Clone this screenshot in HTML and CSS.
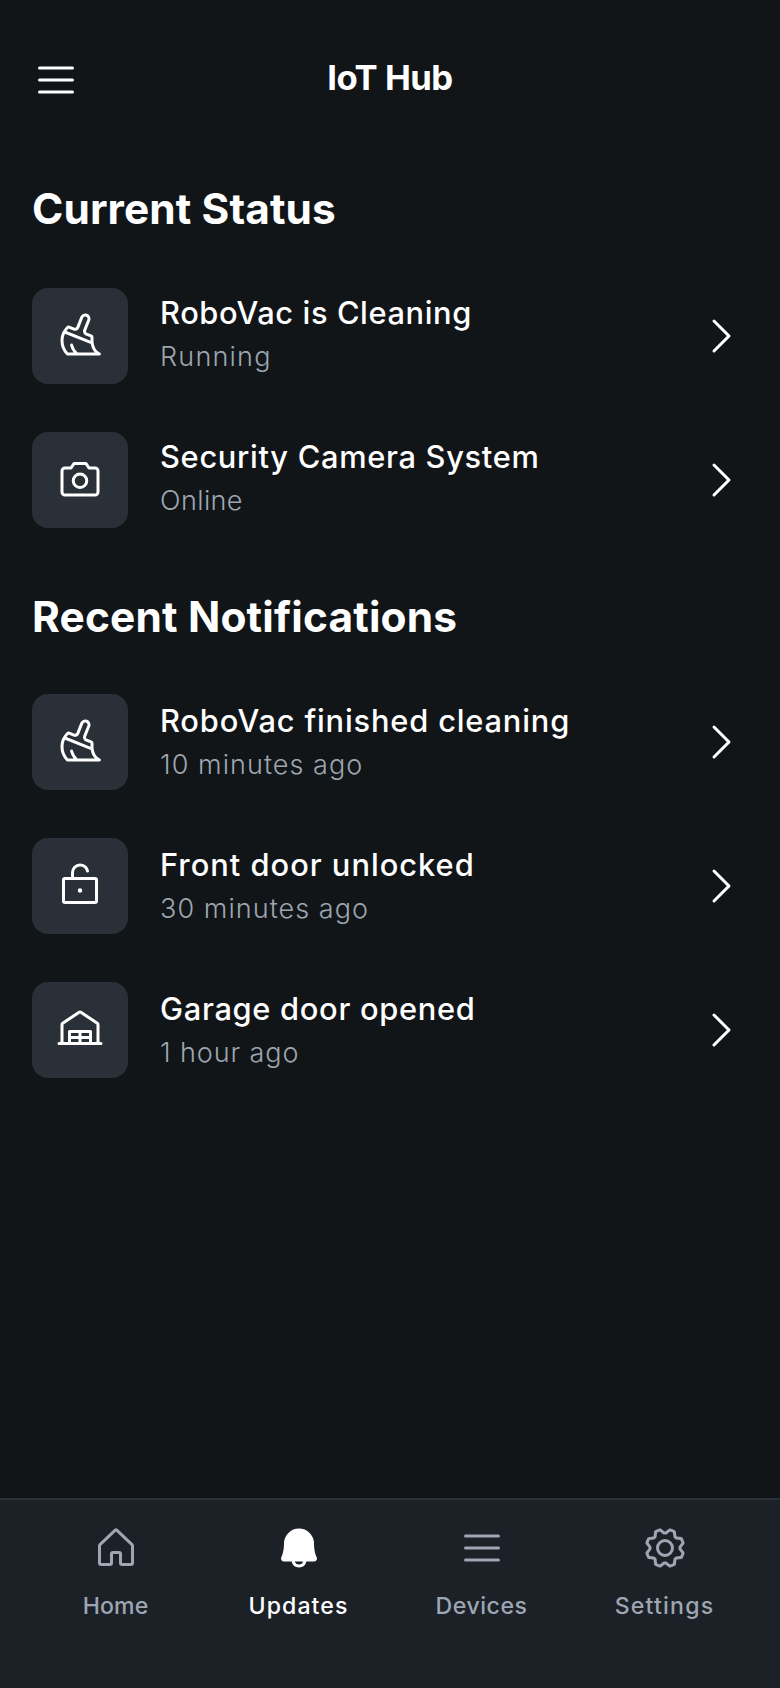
FILE: index.html
```html
<!DOCTYPE html>
<html lang="en">
<head>
<meta charset="utf-8">
<title>IoT Hub</title>
<link rel="stylesheet" href="styles.css">
</head>
<body>
<svg class="sprite" aria-hidden="true">
  <symbol id="list" viewBox="0 0 256 256"><path d="M224,128a8,8,0,0,1-8,8H40a8,8,0,0,1,0-16H216A8,8,0,0,1,224,128ZM40,72H216a8,8,0,0,0,0-16H40a8,8,0,0,0,0,16ZM216,184H40a8,8,0,0,0,0,16H216a8,8,0,0,0,0-16Z"/></symbol>
  <symbol id="broom" viewBox="0 0 256 256"><path d="M235.5,216.81c-22.56-11-35.5-34.58-35.5-64.8V134.73a15.94,15.94,0,0,0-10.09-14.87L165,110a8,8,0,0,1-4.48-10.34l21.32-53a28,28,0,0,0-16.1-37,28.14,28.14,0,0,0-35.82,16,.61.61,0,0,0,0,.12L108.9,79a8,8,0,0,1-10.37,4.49L73.11,73.14A15.89,15.89,0,0,0,55.74,76.8C34.68,98.45,24,123.75,24,152a111.45,111.45,0,0,0,31.18,77.53A8,8,0,0,0,61,232H232a8,8,0,0,0,3.5-15.19ZM67.14,88l25.41,10.3a24,24,0,0,0,31.23-13.45l21-53c2.56-6.11,9.47-9.27,15.43-7a12,12,0,0,1,6.88,15.92L145.69,93.76a24,24,0,0,0,13.43,31.14L184,134.73V152c0,.33,0,.66,0,1L55.77,101.71A108.84,108.84,0,0,1,67.14,88Zm48,128a87.53,87.53,0,0,1-24.34-42,8,8,0,0,0-15.49,4,105.16,105.16,0,0,0,18.36,38H64.44A95.54,95.54,0,0,1,40,152a85.9,85.9,0,0,1,7.73-36.29l137.8,55.12c3,18,10.56,33.48,21.89,45.16Z"/></symbol>
  <symbol id="camera" viewBox="0 0 256 256"><path d="M208,56H180.28L166.65,35.56A8,8,0,0,0,160,32H96a8,8,0,0,0-6.65,3.56L75.71,56H48A24,24,0,0,0,24,80V192a24,24,0,0,0,24,24H208a24,24,0,0,0,24-24V80A24,24,0,0,0,208,56Zm8,136a8,8,0,0,1-8,8H48a8,8,0,0,1-8-8V80a8,8,0,0,1,8-8H80a8,8,0,0,0,6.66-3.56L100.28,48h55.43l13.63,20.44A8,8,0,0,0,176,72h32a8,8,0,0,1,8,8ZM128,88a44,44,0,1,0,44,44A44.05,44.05,0,0,0,128,88Zm0,72a28,28,0,1,1,28-28A28,28,0,0,1,128,160Z"/></symbol>
  <symbol id="lock-open" viewBox="0 0 256 256"><path d="M208,80H96V56a32,32,0,0,1,32-32c15.37,0,29.2,11,32.16,25.59a8,8,0,0,0,15.68-3.18C171.32,24.15,151.2,8,128,8A48.05,48.05,0,0,0,80,56V80H48A16,16,0,0,0,32,96V208a16,16,0,0,0,16,16H208a16,16,0,0,0,16-16V96A16,16,0,0,0,208,80Zm0,128H48V96H208V208Zm-68-56a12,12,0,1,1-12-12A12,12,0,0,1,140,152Z"/></symbol>
  <symbol id="garage" viewBox="0 0 256 256"><path d="M240,192h-8V98.67a16,16,0,0,0-7.12-13.31l-88-58.67a16,16,0,0,0-17.75,0l-88,58.67A16,16,0,0,0,24,98.67V192H16a8,8,0,0,0,0,16H240a8,8,0,0,0,0-16ZM40,98.67,128,40l88,58.66V192H192V136a8,8,0,0,0-8-8H72a8,8,0,0,0-8,8v56H40ZM176,144v16H136V144Zm-56,16H80V144h40ZM80,176h40v16H80Zm56,0h40v16H136Z"/></symbol>
  <symbol id="caret" viewBox="0 0 256 256"><path d="M181.66,133.66l-80,80a8,8,0,0,1-11.32-11.32L164.69,128,90.34,53.66a8,8,0,0,1,11.32-11.32l80,80A8,8,0,0,1,181.66,133.66Z"/></symbol>
  <symbol id="house" viewBox="0 0 256 256"><path d="M218.83,103.77l-80-75.48a1.14,1.14,0,0,1-.11-.11,16,16,0,0,0-21.53,0l-.11.11L37.17,103.77A16,16,0,0,0,32,115.55V208a16,16,0,0,0,16,16H96a16,16,0,0,0,16-16V160h32v48a16,16,0,0,0,16,16h48a16,16,0,0,0,16-16V115.55A16,16,0,0,0,218.83,103.77ZM208,208H160V160a16,16,0,0,0-16-16H112a16,16,0,0,0-16,16v48H48V115.55l.11-.1L128,40l79.9,75.43.11.1Z"/></symbol>
  <symbol id="bell" viewBox="0 0 256 256"><path d="M221.8,175.94C216.25,166.38,208,139.33,208,104a80,80,0,1,0-160,0c0,35.34-8.26,62.38-13.81,71.94A16,16,0,0,0,48,200H88.81a40,40,0,0,0,78.38,0H208a16,16,0,0,0,13.8-24.06ZM128,216a24,24,0,0,1-22.62-16h45.24A24,24,0,0,1,128,216Z"/></symbol>
  <symbol id="gear" viewBox="0 0 256 256"><path d="M128,80a48,48,0,1,0,48,48A48.05,48.05,0,0,0,128,80Zm0,80a32,32,0,1,1,32-32A32,32,0,0,1,128,160Zm88-29.84q.06-2.16,0-4.32l14.92-18.64a8,8,0,0,0,1.48-7.06,107.21,107.21,0,0,0-10.88-26.25,8,8,0,0,0-6-3.93l-23.72-2.64q-1.48-1.56-3-3L186,40.54a8,8,0,0,0-3.94-6,107.71,107.71,0,0,0-26.25-10.87,8,8,0,0,0-7.06,1.49L130.16,40Q128,40,125.84,40L107.2,25.11a8,8,0,0,0-7.06-1.48A107.6,107.6,0,0,0,73.89,34.51a8,8,0,0,0-3.93,6L67.32,64.27q-1.56,1.49-3,3L40.54,70a8,8,0,0,0-6,3.94,107.71,107.71,0,0,0-10.87,26.25,8,8,0,0,0,1.49,7.06L40,125.84Q40,128,40,130.16L25.11,148.8a8,8,0,0,0-1.48,7.06,107.21,107.21,0,0,0,10.88,26.25,8,8,0,0,0,6,3.93l23.72,2.64q1.49,1.56,3,3L70,215.46a8,8,0,0,0,3.94,6,107.71,107.71,0,0,0,26.25,10.87,8,8,0,0,0,7.06-1.49L125.84,216q2.16.06,4.32,0l18.64,14.92a8,8,0,0,0,7.06,1.48,107.21,107.21,0,0,0,26.25-10.88,8,8,0,0,0,3.93-6l2.64-23.72q1.56-1.48,3-3L215.46,186a8,8,0,0,0,6-3.94,107.71,107.71,0,0,0,10.87-26.25,8,8,0,0,0-1.49-7.06Zm-16.1-6.5a73.93,73.93,0,0,1,0,8.68,8,8,0,0,0,1.74,5.48l14.19,17.73a91.57,91.57,0,0,1-6.23,15L187,173.11a8,8,0,0,0-5.1,2.64,74.11,74.11,0,0,1-6.14,6.14,8,8,0,0,0-2.64,5.1l-2.51,22.58a91.32,91.32,0,0,1-15,6.23l-17.74-14.19a8,8,0,0,0-5-1.75h-.48a73.93,73.93,0,0,1-8.68,0,8,8,0,0,0-5.48,1.74L100.45,215.8a91.57,91.57,0,0,1-15-6.23L82.89,187a8,8,0,0,0-2.64-5.1,74.11,74.11,0,0,1-6.14-6.14,8,8,0,0,0-5.1-2.64L46.43,170.6a91.32,91.32,0,0,1-6.23-15l14.19-17.74a8,8,0,0,0,1.74-5.48,73.93,73.93,0,0,1,0-8.68,8,8,0,0,0-1.74-5.48L40.2,100.45a91.57,91.57,0,0,1,6.23-15L69,82.89a8,8,0,0,0,5.1-2.64,74.11,74.11,0,0,1,6.14-6.14A8,8,0,0,0,82.89,69L85.4,46.43a91.32,91.32,0,0,1,15-6.23l17.74,14.19a8,8,0,0,0,5.48,1.74,73.93,73.93,0,0,1,8.68,0,8,8,0,0,0,5.48-1.74L155.55,40.2a91.57,91.57,0,0,1,15,6.23L173.11,69a8,8,0,0,0,2.64,5.1,74.11,74.11,0,0,1,6.14,6.14,8,8,0,0,0,5.1,2.64l22.58,2.51a91.32,91.32,0,0,1,6.23,15l-14.19,17.74A8,8,0,0,0,199.87,123.66Z"/></symbol>
</svg>

<header class="header">
  <svg class="icon"><use href="#list"/></svg>
  <h1 class="header-title">IoT Hub</h1>
  <span class="header-spacer"></span>
</header>

<main class="content">
  <h2 class="section-title section-status">Current Status</h2>
  <ul class="list">
    <li class="item">
      <span class="tile"><svg class="icon"><use href="#broom"/></svg></span>
      <div class="text"><p class="title robovac-status">RoboVac is Cleaning</p><p class="sub running">Running</p></div>
      <span class="caret"><svg class="icon"><use href="#caret"/></svg></span>
    </li>
    <li class="item">
      <span class="tile"><svg class="icon"><use href="#camera"/></svg></span>
      <div class="text"><p class="title camera-status">Security Camera System</p><p class="sub online">Online</p></div>
      <span class="caret"><svg class="icon"><use href="#caret"/></svg></span>
    </li>
  </ul>

  <h2 class="section-title section-recent">Recent Notifications</h2>
  <ul class="list list-recent">
    <li class="item">
      <span class="tile"><svg class="icon"><use href="#broom"/></svg></span>
      <div class="text"><p class="title robovac-done">RoboVac finished cleaning</p><p class="sub minutes">10 minutes ago</p></div>
      <span class="caret"><svg class="icon"><use href="#caret"/></svg></span>
    </li>
    <li class="item">
      <span class="tile"><svg class="icon"><use href="#lock-open"/></svg></span>
      <div class="text"><p class="title front-door">Front door unlocked</p><p class="sub minutes">30 minutes ago</p></div>
      <span class="caret"><svg class="icon"><use href="#caret"/></svg></span>
    </li>
    <li class="item">
      <span class="tile"><svg class="icon"><use href="#garage"/></svg></span>
      <div class="text"><p class="title garage-door">Garage door opened</p><p class="sub hour">1 hour ago</p></div>
      <span class="caret"><svg class="icon"><use href="#caret"/></svg></span>
    </li>
  </ul>
</main>

<nav class="nav">
  <a class="tab tab-home"><svg class="icon"><use href="#house"/></svg><span class="label">Home</span></a>
  <a class="tab tab-updates active"><svg class="icon"><use href="#bell"/></svg><span class="label">Updates</span></a>
  <a class="tab tab-devices"><svg class="icon"><use href="#list"/></svg><span class="label">Devices</span></a>
  <a class="tab tab-settings"><svg class="icon"><use href="#gear"/></svg><span class="label">Settings</span></a>
</nav>
</body>
</html>
```
FILE: styles.css
```css
* { box-sizing: border-box; margin: 0; padding: 0; }

body {
  display: flex;
  flex-direction: column;
  width: 780px;
  height: 1688px;
  overflow: hidden;
  background: #111518;
  color: #fff;
  font-family: Inter, "Liberation Sans", sans-serif;
}

.sprite { display: none; }
.icon { display: block; flex: none; width: 48px; height: 48px; fill: currentColor; }

.header { display: flex; align-items: flex-start; height: 144px; padding: 56px 32px 0; }
.header-title {
  flex: 1;
  text-align: center;
  font-size: 34.67px;
  line-height: 43px;
  font-weight: 700;
  letter-spacing: -0.51px;
}
.header-spacer { width: 48px; }

.content { flex: 1; }
.section-title { padding: 40px 32px 0; font-size: 42.4px; line-height: 50px; font-weight: 700; }
.section-status { height: 120px; letter-spacing: 0.1px; }
.section-recent { height: 118px; letter-spacing: 0.17px; }

.list { list-style: none; }
.item { display: flex; align-items: center; gap: 32px; height: 144px; padding: 0 32px; }
.tile {
  display: grid;
  place-items: center;
  flex: none;
  width: 96px;
  height: 96px;
  border-radius: 16px;
  background: #293037;
}
.text { flex: 1; padding-bottom: 3px; white-space: nowrap; }
.list-recent .text { padding-bottom: 0; }
.title { font-size: 30.8px; line-height: 44px; font-weight: 500; letter-spacing: 0.7px; }
.sub { font-size: 27px; line-height: 43px; font-weight: 350; letter-spacing: 0.9px; color: #9da6b0; }
.caret { display: grid; place-items: center; width: 56px; height: 56px; }

.robovac-status { letter-spacing: 0.6px; }
.robovac-done { letter-spacing: 0.83px; }
.front-door { letter-spacing: 1px; }
.garage-door { letter-spacing: 0.7px; }
.running { letter-spacing: 1.2px; }
.online { letter-spacing: 0.4px; }
.minutes { letter-spacing: 1.05px; }

.nav {
  display: grid;
  grid-template-columns: repeat(4, 1fr);
  gap: 16px;
  height: 190px;
  padding: 24px 32px 0;
  border-top: 2px solid #2a3136;
  background: #1c2127;
}
.tab { display: flex; flex-direction: column; align-items: center; gap: 16px; color: #9da6b2; }
.active { color: #fff; }
.label { font-size: 23.1px; line-height: 36px; font-weight: 500; }
.tab-home .label { letter-spacing: 0.1px; }
.tab-updates .label { letter-spacing: 1.08px; }
.tab-devices .label { letter-spacing: 0.53px; }
.tab-settings .label { letter-spacing: 1.2px; }
```
